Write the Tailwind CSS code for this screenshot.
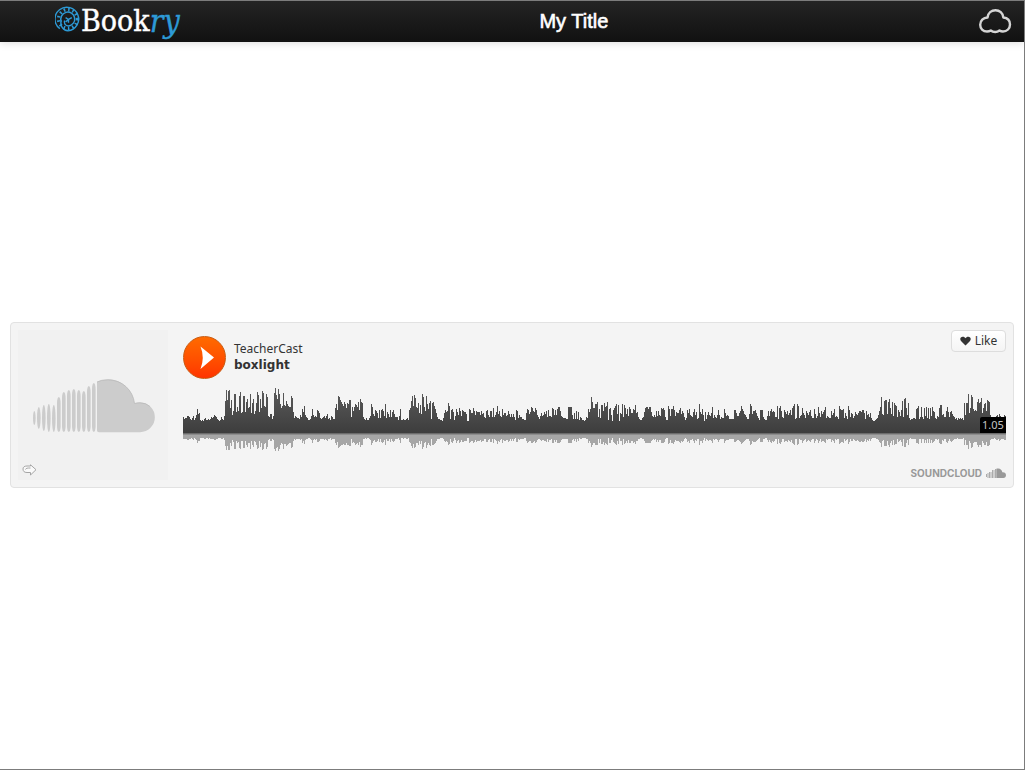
<!DOCTYPE html>
<html lang="en">
<head>
    <meta charset="UTF-8">
    <meta name="viewport" content="width=device-width, initial-scale=1.0">
    <title>My Title</title>
    <script src="https://cdn.jsdelivr.net/npm/@tailwindcss/browser@4"></script>
</head>
<body class="min-h-screen flex flex-col bg-white border-t border-r border-b border-[#7c7c7c] font-['Noto_Sans',sans-serif]">

    <header class="flex items-center h-[41px] pb-[2px] pl-[55px] pr-[12px] bg-linear-to-b from-[#242424] to-[#111111] shadow-[0_1px_8px_rgba(0,0,0,0.15)]">
        <a href="#" class="flex items-center text-[30px] leading-[36px] text-white font-['DejaVu_Serif_Condensed','DejaVu_Serif',serif]">
            <svg class="w-[26px] h-[26px] mb-1" viewBox="0 0 27 27" fill="none" stroke="#2d9ad6" stroke-width="1.5">
                <path d="M5 23.500A12.300 12.300 0 1 1 13.500 25.800C8 25.500 5 20 6.500 15"/>
                <circle cx="13.500" cy="13.500" r="9.800" stroke-width="3.600" stroke-dasharray="1.600 3"/>
                <path d="M6.500 16A7.200 7.200 0 1 1 14 20.700C10.500 20.500 9 17.500 10 15"/>
                <path d="M11 12L14 14L17.500 12M14 14V17.500M11 16.500L14 14"/>
            </svg>
            <span class="[-webkit-text-stroke:0.4px_white]">Book</span><i class="text-[32px] text-[#2d9ad6] [-webkit-text-stroke:0.4px_#2d9ad6]">ry</i>
        </a>
        <h1 class="flex-1 mr-[10px] text-center text-xl leading-6 text-white [-webkit-text-stroke:0.6px_white] font-['Liberation_Sans',sans-serif]">My Title</h1>
        <button type="button" aria-label="Cloud">
            <svg class="w-[34px] h-[26px]" viewBox="0 0 34 26" fill="none" stroke="#d4d4d4" stroke-width="2.400" stroke-linejoin="round">
                <path d="M9.500 9.500C10 5 13.500 2.200 17.500 2.200S25 5 25.300 9.500C29.500 10 32 12.800 32 16.500C32 20.500 29 23.500 25 23.500C23.500 23.500 22.500 23.200 21.500 22.500C20 23.700 18.500 24 17.200 24S14 23.500 12.800 22.500C11.500 23.300 10.500 23.500 9 23.500C5 23.500 2.200 20.500 2.200 16.800C2.200 12.800 5.200 9.500 9.500 9.500Z"/>
            </svg>
        </button>
    </header>

    <main class="flex-1 flex items-center px-[10px] pb-[2px]">
        <section class="w-full flex gap-[15px] p-[7px] bg-[#f4f4f4] border border-[#e2e2e2] rounded-sm">

            <!-- cover -->
            <div class="w-[150px] h-[150px] shrink-0 flex flex-col justify-end items-start gap-[31px] bg-[#f1f1f1] pl-1 pb-1">
                <svg class="w-[124px] h-[54px] ml-[10px]" viewBox="0 0 124 54" fill="#cccccc">
                    <g id="bars"></g>
                    <path d="M65 3Q69 .500 76 .500C90 .500 101 11 102.500 24.500Q105 23.500 108 23.500A14.800 14.800 0 0 1 108 53.200H67Q65 53.200 65 51.500Z"/>
                    <path d="M65 3Q69 .800 76 .800C90 .800 101 11 102.500 24.500Q105 23.800 108 23.800Q114 23.800 118 27.500" fill="none" stroke="#b9b9b9" stroke-width=".8"/>
                </svg>
                <button type="button" aria-label="Share">
                    <svg class="w-[15px] h-[12px]" viewBox="0 0 15 12" fill="#fafafa" stroke="#a5a5a5" stroke-width="1">
                        <path d="M8.500 8.500H5C2 8.500 1 7 1 5S2.500 2 5 2H8.500V.800L14 5.700L8.500 11Z"/>
                        <path d="M3.500 5.500C4 4 5.500 4 8.500 4" fill="none"/>
                    </svg>
                </button>
            </div>

            <div class="flex-1 min-w-0 flex flex-col">
                <div class="flex justify-between items-start">
                    <div class="flex items-center gap-2 pt-[6px]">
                        <button type="button" aria-label="Play" class="w-[43px] h-[43px] rounded-full border border-[#c95a10] bg-linear-to-b from-[#ff6a00] to-[#ff3300]">
                            <svg class="w-full h-full" viewBox="0 0 41 41" fill="#ffffff"><path d="M16.500 9.500L30 20.500L16.500 32Q21 20.500 16.500 9.500Z"/></svg>
                        </button>
                        <div class="text-[#333333]">
                            <p class="text-[12px] leading-4">TeacherCast</p>
                            <p class="text-[12px] leading-4 font-bold font-['DejaVu_Sans',sans-serif]">boxlight</p>
                        </div>
                    </div>
                    <button type="button" class="flex items-center justify-center gap-1 w-[55px] h-[22px] rounded-sm border border-[#dddddd] bg-linear-to-b from-white to-[#f4f4f4] text-[12px] leading-4 text-[#333333]">
                        <svg class="w-[11px] h-[10px]" viewBox="0 0 11 10" fill="#333333"><path d="M5.500 9.500L1 5C-.5 3 .500 .800 2.700 .800C4 .800 5 1.500 5.500 2.300C6 1.500 7 .800 8.300 .800C10.500 .800 11.500 3 10 5Z"/></svg>
                        Like
                    </button>
                </div>

                <div class="relative mt-1">
                    <svg class="block w-full h-[70px]" viewBox="0 0 823 70" preserveAspectRatio="none" shape-rendering="crispEdges">
                        <defs>
                            <linearGradient id="wave" gradientUnits="userSpaceOnUse" x1="0" y1="4" x2="0" y2="50">
                                <stop offset="0" stop-color="#5c5c5c"/>
                                <stop offset="1" stop-color="#3d3d3d"/>
                            </linearGradient>
                        </defs>
                        <path id="reflection" fill="#a6a6a6"/>
                        <path id="peaks" fill="url(#wave)"/>
                        <rect y="50" width="823" height="1" fill="#6b6b6b"/>
                        <rect y="51" width="823" height="1" fill="#8d8d8d"/>
                    </svg>
                    <span class="absolute right-0 top-[34px] w-[26px] h-4 text-center text-[11px] leading-4 text-[#c4c4c4] bg-black rounded-tl-xs">1.05</span>
                </div>

                <a href="#" class="mt-auto self-end flex items-center gap-1 text-[10px] leading-[14px] font-bold text-[#999999] font-['Inter',sans-serif]">
                    SOUNDCLOUD
                    <svg class="w-5 h-[10px]" viewBox="0 0 20 10" fill="#999999">
                        <path d="M0 6h1v3H0zM1.500 5h1v5h-1zM3 4h1v6H3zM4.500 4h1v6h-1zM6 2h1v8H6zM7.500 2h1v8h-1zM9 1h1v9H9z" opacity=".8"/>
                        <path d="M10.300 .800C13.500-.5 16 1.500 16.300 4.300C18.500 4 20 5.300 20 7.200C20 8.800 19 10 17.400 10H10.300Z"/>
                    </svg>
                </a>
            </div>
        </section>
    </main>

    <script>
        // peak height for each step of the track
        const peaks = [
            16,14,15,15,17,17,16,14,13,15,17,13,15,18,24,19,20,13,12,13,12,14,15,13,13,14,13,14,16,15,16,18,17,16,14,13,12,13,16,14,13,17,
            32,43,33,42,43,25,33,18,22,39,39,21,26,22,37,41,20,21,37,37,21,31,34,25,26,39,20,30,34,19,22,30,41,38,21,34,25,42,40,27,26,39,36,17,16,19,19,14,17,
            40,45,38,34,44,39,29,25,27,40,28,27,32,29,27,26,26,37,35,21,15,17,16,15,15,14,18,16,24,21,27,18,16,15,13,13,14,17,24,18,16,17,16,23,22,20,15,14,
            15,16,17,15,17,19,14,15,13,17,16,14,14,25,29,23,37,36,33,31,29,27,31,29,25,30,29,33,33,16,26,22,26,29,28,26,31,23,34,31,30,16,14,13,15,13,13,15,17,29,
            26,19,17,23,22,20,15,23,15,23,24,22,17,29,15,21,19,16,
            23,16,21,23,19,16,16,16,13,17,24,13,13,14,13,13,14,15,13,23,25,32,37,27,38,35,26,25,30,20,28,19,39,36,26,22,37,29,24,30,32,14,30,31,27,24,20,16,14,14,
            13,13,12,15,20,23,21,22,30,27,14,23,24,21,13,17,24,21,18,25,22,17,23,22,21,21,19,12,12,24,23,20,20,25,22,18,22,21,21,21,18,22,19,20,16,15,22,23,18,16,
            22,22,16,25,16,18,21,27,19,22,17,16,24,18,20,20,17,18,22,19,16,19,16,19,16,13,23,22,15,18,16,16,14,14,13,13,20,24,23,19,21,26,25,22,21,25,23,18,16,14,
            17,20,17,18,21,19,22,16,23,17,17,16,25,24,18,23,18,24,26,26,22,17,16,15,15,15,14,14,26,26,26,26,18,14,20,14,22,14,21,13,16,15,13,13,12,13,16,15,24,21,
            24,36,31,25,29,29,31,16,24,15,
            28,28,22,30,26,27,31,13,24,25,18,12,23,25,27,29,19,28,12,20,19,29,16,28,25,19,24,17,26,24,20,20,24,23,28,20,21,16,14,13,13,15,16,21,25,26,26,24,26,26,
            21,17,16,18,16,22,17,22,18,17,25,24,25,23,16,13,13,27,24,17,24,24,27,23,17,21,20,20,23,25,19,22,20,16,13,15,23,20,24,18,17,16,21,24,18,21,14,15,29,21,
            19,24,18,12,21,14,18,21,18,17,20,26,15,18,16,15,18,23,18,14,16,15,15,24,20,17,18,17,14,14,14,14,14,23,23,20,17,17,20,22,27,24,22,19,18,16,14,14,19,29,
            27,19,22,22,23,20,17,15,13,23,23,23,16,14,13,13,17,22,17,22,24,21,22,21,16,16,27,14,25,27,22,16,15,23,21,19,22,18,20,23,18,25,27,29,14,15,29,27,15,17,
            18,25,20,18,15,22,20,18,21,23,
            17,15,15,24,19,15,17,26,20,16,22,19,21,23,26,15,17,16,15,15,22,18,20,24,16,17,16,14,27,24,23,23,24,15,20,17,14,27,23,16,20,19,15,17,21,19,18,20,22,22,
            21,23,23,20,14,22,18,19,16,20,15,13,12,12,13,14,15,18,22,26,36,19,18,32,33,33,19,31,34,25,19,31,17,30,28,27,16,23,21,17,23,32,16,34,35,25,18,30,15,13,
            14,14,15,15,14,24,25,27,14,16,26,16,14,25,17,26,15,25,14,25,17,26,22,21,15,14,17,16,25,28,28,18,19,16,16,22,26,21,16,21,22,19,17,16,14,15,13,15,14,15,14,15,13,
            30,18,30,30,39,20,25,38,36,24,22,23,22,31,34,30,31,35,20,25,29,30,22,33,32,31,18,14,15,16,13,15,17,18,16,19,17,14,16,15,18,17
        ];
        const baseline = 50;
        const width = 823;
        const step = width / peaks.length;

        function outline(scale) {
            let d = `M0 ${baseline}`;
            peaks.forEach((h, i) => {
                d += `V${baseline - Math.round(h * scale)}H${Math.round((i + 1) * step)}`;
            });
            return d + `V${baseline}Z`;
        }

        document.getElementById("peaks").setAttribute("d", outline(1));
        document.getElementById("reflection").setAttribute("d", outline(-0.4));

        // bars of the cover logo: [x, top, bottom]
        const bars = [[1, 32, 46], [5, 28, 50], [10, 26, 52], [15, 25, 53], [20, 26, 53], [25, 18, 53], [30, 13, 53], [35, 11, 53], [40, 10, 53], [45, 11, 53], [50, 12, 53], [55, 7, 53], [60, 4, 53]];
        document.getElementById("bars").innerHTML = bars.map(([x, top, bottom], i) => {
            const w = i < 1 ? 2.6 : 3.6;
            return `<rect x="${x}" y="${top}" width="${w}" height="${bottom - top}" rx="${w / 2}" ry="${i < 5 ? (bottom - top) / 2 : 6}"/>`;
        }).join("");
    </script>
</body>
</html>
